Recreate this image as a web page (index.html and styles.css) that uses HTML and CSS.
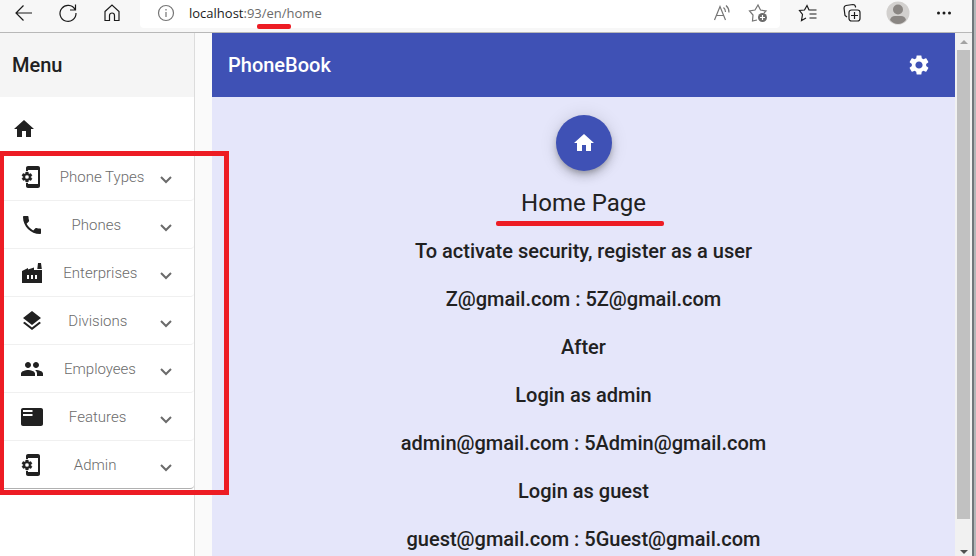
FILE: index.html
```html
<!DOCTYPE html>
<html lang="en">
<head>
<meta charset="utf-8">
<title>PhoneBook</title>
<link rel="stylesheet" href="styles.css">
</head>
<body>
<svg class="defs" aria-hidden="true">
  <symbol id="home" viewBox="0 0 24 24"><path d="M10 20v-6h4v6h5v-8h3L12 3 2 12h3v8z"/></symbol>
  <symbol id="phone-setup" viewBox="0 0 24 24"><path d="M11.8 12.5v-1l1.1-.8c.1-.1.1-.2.1-.3l-1-1.7c-.1-.1-.2-.2-.3-.1l-1.3.4c-.3-.2-.6-.4-.9-.5l-.2-1.3c0-.1-.1-.2-.3-.2H7c-.1 0-.2.1-.3.2l-.2 1.3c-.3.1-.6.3-.9.5l-1.3-.5c-.1 0-.2 0-.3.1l-1 1.7c-.1.2 0 .3.1.4l1.1.8v1l-1.1.8c-.1.1-.2.2-.1.3l1 1.7c.1.1.2.2.3.1l1.3-.4c.3.2.6.4.9.5l.2 1.3c.1.1.2.2.3.2h2c.1 0 .2-.1.3-.2l.2-1.3c.3-.1.6-.3.9-.5l1.3.5c.1 0 .2 0 .3-.1l1-1.7c.1-.1 0-.2-.1-.3l-1.1-.9zM8 14c-1.100 0-2-.9-2-2s.9-2 2-2 2 .9 2 2-.9 2-2 2z" stroke="currentColor" stroke-width=".4" transform="translate(-1 0)"/><path d="M18 1H8c-1.100 0-2 .9-2 2v3h2V5h10v14H8v-1H6v3c0 1.100.9 2 2 2h10c1.100 0 2-.9 2-2V3c0-1.100-.9-2-2-2z"/></symbol>
  <symbol id="phone" viewBox="0 0 24 24"><path d="M6.620 10.790c1.440 2.830 3.760 5.140 6.590 6.590l2.200-2.200c.27-.27.67-.36 1.020-.24 1.120.37 2.330.57 3.570.57.55 0 1 .45 1 1V20c0 .55-.45 1-1 1-9.390 0-17-7.610-17-17 0-.55.45-1 1-1h3.500c.55 0 1 .45 1 1 0 1.250.2 2.450.57 3.570.11.35.03.74-.25 1.020l-2.200 2.200z"/></symbol>
  <symbol id="factory" viewBox="0 0 24 24"><path fill-rule="evenodd" d="M22 22H2V10l6-3v1.500l6-2V9h8v13zM18 2h3l.8 6h-4.500L18 2zM11 18h2v-4h-2v4zm-4 0h2v-4H7v4zm10-4h-2v4h2v-4z"/></symbol>
  <symbol id="layers" viewBox="0 0 24 24"><path d="M11.990 18.540l-7.370-5.730L3 14.070l9 7 9-7-1.630-1.270-7.380 5.740zM12 16l7.360-5.730L21 9l-9-7-9 7 1.630 1.270L12 16z"/></symbol>
  <symbol id="people" viewBox="0 0 24 24"><path d="M16 11c1.660 0 2.990-1.340 2.990-3S17.660 5 16 5s-3 1.340-3 3 1.340 3 3 3zm-8 0c1.660 0 2.990-1.340 2.990-3S9.660 5 8 5 5 6.340 5 8s1.340 3 3 3zm0 2c-2.330 0-7 1.170-7 3.500V19h14v-2.500c0-2.330-4.670-3.500-7-3.500zm8 0c-.29 0-.62.02-.97.05 1.160.84 1.970 1.970 1.970 3.450V19h6v-2.500c0-2.330-4.670-3.500-7-3.500z"/></symbol>
  <symbol id="features" viewBox="0 0 24 24"><path fill-rule="evenodd" d="M21 3H3c-1.100 0-2 .9-2 2v14c0 1.100.9 2 2 2h18c1.100 0 2-.9 2-2V5c0-1.100-.9-2-2-2zM12.500 11H3V9h9.500v2zm0-4H3V5h9.500v2z"/></symbol>
  <symbol id="settings" viewBox="0 0 24 24"><path d="M19.140 12.940c.04-.3.06-.61.06-.94 0-.32-.02-.64-.07-.94l2.030-1.580c.18-.14.23-.41.12-.61l-1.920-3.320c-.12-.22-.37-.29-.59-.22l-2.390.96c-.5-.38-1.030-.7-1.620-.94l-.36-2.540c-.04-.24-.24-.41-.48-.41h-3.840c-.24 0-.43.17-.47.41l-.36 2.540c-.59.24-1.130.57-1.620.94l-2.390-.96c-.22-.08-.47 0-.59.22L2.740 8.870c-.12.21-.08.47.12.61l2.030 1.580c-.05.3-.09.63-.09.94s.02.64.07.94l-2.030 1.580c-.18.14-.23.41-.12.61l1.920 3.320c.12.22.37.29.59.22l2.390-.96c.5.38 1.030.7 1.620.94l.36 2.540c.05.24.24.41.48.41h3.840c.24 0 .44-.17.47-.41l.36-2.540c.59-.24 1.130-.56 1.620-.94l2.390.96c.22.08.47 0 .59-.22l1.920-3.320c.12-.22.07-.47-.12-.61l-2.010-1.580zM12 15.600c-1.980 0-3.600-1.620-3.600-3.600s1.620-3.600 3.600-3.600 3.600 1.620 3.600 3.600-1.620 3.600-3.600 3.600z"/></symbol>
  <symbol id="chevron" viewBox="0 0 12 8"><path d="M1 1l5 5 5-5" fill="none" stroke="currentColor" stroke-width="2"/></symbol>
</svg>

<div class="window">
  <header class="browser">
    <div class="nav-buttons">
      <button aria-label="Back"><svg class="line" viewBox="0 0 20 20"><path d="M18 10H2M9.500 2.500L2 10l7.500 7.500"/></svg></button>
      <button aria-label="Refresh"><svg class="line" viewBox="0 0 20 20"><path d="M17 6.500A8 8 0 1 0 18 10M17.500 1.500v5.500h-5.500"/></svg></button>
      <button aria-label="Home"><svg class="line" viewBox="0 0 20 20"><path d="M3 8.500L10 2l7 6.500V17.500h-4.500v-5a2.500 2.500 0 0 0-5 0v5H3z"/></svg></button>
    </div>
    <div class="address">
      <svg class="line info" viewBox="0 0 20 20"><circle cx="10" cy="10" r="7.500"/><path d="M10 9v5M10 6v1.500"/></svg>
      <span class="url"><span class="host">localhost</span>:93<span class="lang">/en/</span>home</span>
      <button aria-label="Read aloud"><svg class="line gray" viewBox="0 0 20 20"><path d="M2.500 17L8 3.500 13.500 17M4.500 12.500h7M11.500 4.500a6 6 0 0 1 2 4.500M14 2.500a9 9 0 0 1 3 7"/></svg></button>
      <button aria-label="Add to favorites"><svg class="line gray" viewBox="0 0 20 20"><path d="M9 17l-4.500 1 .5-6L1.500 8l5.500-1L10 2l2.500 5 5.500 1-2 2"/><circle cx="14.500" cy="14.500" r="4.500" fill="#6b6b6b" stroke="none"/><path d="M14.500 12v5M12 14.500h5" stroke="#fff"/></svg></button>
    </div>
    <div class="tools">
      <button aria-label="Favorites"><svg class="line" viewBox="0 0 20 20"><path d="M8 15l-4.500 2.500 1-6L1.500 7.500 6.500 7 9 2.500 11 7h7.500M11.500 11h7M11.500 15h7"/></svg></button>
      <button aria-label="Collections"><svg class="line" viewBox="0 0 20 20"><path d="M5 14l-2-1.500L2 5q0-2 2-2.500l7-1q2 0 2.500 2v1"/><rect x="7" y="7" width="11" height="11" rx="2.500"/><path d="M12.500 9v7M9 12.500h7"/></svg></button>
      <button aria-label="Profile"><svg class="avatar" viewBox="0 0 24 24"><circle cx="12" cy="12" r="11.500" fill="#d2d0ce"/><circle cx="12" cy="8.500" r="5" fill="#8a8683"/><path d="M4 19q1-4 5-4h6q4 0 5 4-3.500 4-8 4t-8-4z" fill="#8a8683"/></svg></button>
      <button aria-label="More"><svg viewBox="0 0 20 20"><circle cx="4.500" cy="10" r="1.500"/><circle cx="10" cy="10" r="1.500"/><circle cx="15.500" cy="10" r="1.500"/></svg></button>
    </div>
  </header>

  <div class="page">
    <aside class="side">
      <h2 class="side-title">Menu</h2>
      <a class="home-link" href="#" aria-label="Home"><svg><use href="#home"/></svg></a>
      <nav class="menu">
        <button class="item"><svg class="icon"><use href="#phone-setup"/></svg><span class="label">Phone Types</span><svg class="arrow"><use href="#chevron"/></svg></button>
        <button class="item"><svg class="icon"><use href="#phone"/></svg><span class="label">Phones</span><svg class="arrow"><use href="#chevron"/></svg></button>
        <button class="item"><svg class="icon"><use href="#factory"/></svg><span class="label">Enterprises</span><svg class="arrow"><use href="#chevron"/></svg></button>
        <button class="item"><svg class="icon"><use href="#layers"/></svg><span class="label">Divisions</span><svg class="arrow"><use href="#chevron"/></svg></button>
        <button class="item"><svg class="icon"><use href="#people"/></svg><span class="label">Employees</span><svg class="arrow"><use href="#chevron"/></svg></button>
        <button class="item"><svg class="icon"><use href="#features"/></svg><span class="label">Features</span><svg class="arrow"><use href="#chevron"/></svg></button>
        <button class="item"><svg class="icon"><use href="#phone-setup"/></svg><span class="label">Admin</span><svg class="arrow"><use href="#chevron"/></svg></button>
        <span class="frame"></span>
      </nav>
    </aside>

    <div class="content">
      <div class="toolbar">
        <span>PhoneBook</span>
        <button aria-label="Settings"><svg><use href="#settings"/></svg></button>
      </div>
      <main class="main">
        <button class="fab" aria-label="Home"><svg><use href="#home"/></svg></button>
        <h1>Home Page</h1>
        <p>To activate security, register as a user</p>
        <p>Z@gmail.com : 5Z@gmail.com</p>
        <p>After</p>
        <p>Login as admin</p>
        <p>admin@gmail.com : 5Admin@gmail.com</p>
        <p>Login as guest</p>
        <p>guest@gmail.com : 5Guest@gmail.com</p>
      </main>
    </div>

    <div class="scrollbar" aria-hidden="true">
      <svg class="up" viewBox="0 0 8 4"><path d="M0 4l4-4 4 4z"/></svg>
      <div class="thumb"></div>
      <svg class="down" viewBox="0 0 8 4"><path d="M0 0l4 4 4-4z"/></svg>
    </div>
  </div>
</div>
</body>
</html>
```
FILE: styles.css
```css
* {
  box-sizing: border-box;
}

body {
  margin: 0;
  height: 100vh;
  overflow: hidden;
  display: flex;
  background: #b4b8ba;
  color: #212121;
  font-family: Roboto, "Liberation Sans", sans-serif;
}

button {
  border: 0;
  padding: 0;
  background: none;
  color: inherit;
  font: inherit;
}

svg {
  display: block;
  width: 24px;
  height: 24px;
  fill: currentColor;
}

h1, h2, p {
  margin: 0;
}

.defs {
  display: none;
}

.window {
  flex: 1;
  min-width: 0;
  display: flex;
  flex-direction: column;
  margin-right: 2px;
  border-right: 2px solid #70777b;
}

/* Browser bar */
.browser {
  flex: none;
  display: flex;
  height: 33px;
  padding-left: 14px;
  background: #f7f7f7;
  border-bottom: 1px solid #b8b8b8;
  color: #1b1b1b;
}

.browser svg {
  width: 20px;
  height: 20px;
}

.browser .line {
  fill: none;
  stroke: currentColor;
  stroke-width: 1.2;
}

.nav-buttons,
.address,
.tools {
  display: flex;
  align-items: center;
  height: 26px;
}

.nav-buttons {
  width: 126px;
  gap: 24px;
}

.address {
  flex: 1;
  height: 28px;
  padding: 0 12px 2px 16px;
  gap: 16px;
  background: #fff;
  border-radius: 0 0 4px 4px;
}

.address .info,
.address .gray {
  color: #757575;
}

.url {
  flex: 1;
  margin-left: -3px;
  color: #6b6b6b;
  font: 13px/20px "Open Sans", "Noto Sans", sans-serif;
}

.host {
  color: #1b1b1b;
}

.lang {
  position: relative;
}

.lang::after,
h1::after {
  content: "";
  position: absolute;
  height: 5px;
  border-radius: 2px;
  background: #ed1c24;
}

.lang::after {
  left: -5px;
  right: -4px;
  top: 20px;
}

.tools {
  gap: 24px;
  padding: 0 18px;
}

.browser .avatar {
  width: 24px;
  height: 24px;
}

/* Page */
.page {
  flex: 1;
  min-height: 0;
  display: flex;
  background: #fafafa;
}

.side {
  flex: none;
  width: 195px;
  margin-right: 17px;
  background: #fff;
  border-right: 1px solid #dcdcdc;
}

.side-title {
  padding: 0 12px;
  background: #f5f5f5;
  font-size: 20px;
  font-weight: 500;
  line-height: 64px;
}

.home-link {
  display: block;
  padding: 20px 12px 12px;
  color: inherit;
}

.menu {
  position: relative;
}

.item {
  display: flex;
  align-items: center;
  width: 100%;
  height: 48px;
  padding: 1px 22px 0 20px;
  border-bottom: 1px solid #f0f0f0;
  border-radius: 0 0 4px 4px;
  color: #6b6b6b;
  font-size: 15px;
  font-weight: 300;
}

.item:nth-last-child(2) {
  border-bottom-color: #b0b0b0;
}

.item .icon {
  margin-right: 8px;
  color: #212121;
}

.item::before {
  content: "";
  order: 1;
  flex: 1;
}

.item::after {
  content: "";
  order: 3;
  flex: 2;
}

.label {
  order: 2;
}

.item .arrow {
  order: 4;
  width: 12px;
  height: 8px;
  margin-top: 6px;
}

.frame {
  position: absolute;
  inset: -2px -35px -6px 0;
  border: 5px solid #ed1c24;
  border-left-width: 4px;
  pointer-events: none;
}

.content {
  flex: 1;
  min-width: 0;
  overflow: hidden;
  background: #e5e6fa;
}

.toolbar {
  display: flex;
  align-items: center;
  justify-content: space-between;
  height: 64px;
  padding: 0 24px 0 16px;
  background: #3f51b5;
  color: #fff;
  font-size: 20px;
  font-weight: 500;
}

.main {
  display: flex;
  flex-direction: column;
  align-items: center;
  gap: 16px;
  padding: 18px 16px;
  font-size: 20px;
  font-weight: 500;
  line-height: 32px;
}

.fab {
  display: grid;
  place-items: center;
  width: 56px;
  height: 56px;
  border-radius: 50%;
  background: #3f51b5;
  color: #fff;
  box-shadow: 0 3px 5px -1px rgba(0, 0, 0, .2), 0 6px 10px rgba(0, 0, 0, .14), 0 1px 18px rgba(0, 0, 0, .12);
}

h1 {
  position: relative;
  font-size: 24px;
  font-weight: 400;
}

h1::after {
  left: -25px;
  right: -18px;
  top: 34px;
}

.scrollbar {
  flex: none;
  display: flex;
  flex-direction: column;
  align-items: center;
  width: 17px;
  padding: 7px 2px 2px;
  background: #f1f1f1;
}

.scrollbar svg {
  width: 8px;
  height: 4px;
}

.up {
  color: #a3a3a3;
}

.down {
  color: #505050;
}

.thumb {
  flex: 1;
  width: 100%;
  margin: 6px 0 31px;
  background: #c1c1c1;
}
```
